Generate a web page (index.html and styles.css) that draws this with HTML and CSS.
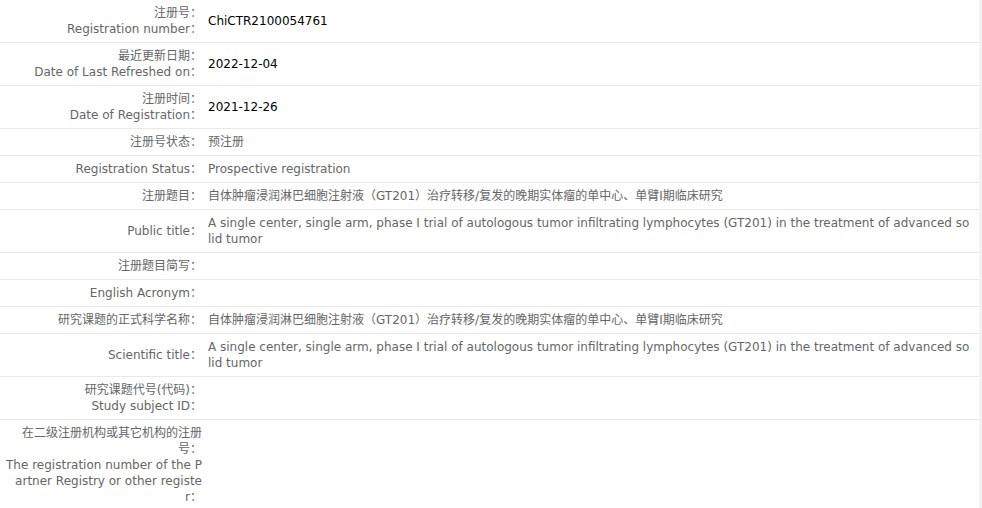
FILE: index.html
```html
<!DOCTYPE html>
<html lang="zh">
<head>
<meta charset="utf-8">
<title>ChiCTR2100054761</title>
<link rel="stylesheet" href="styles.css">
</head>
<body>
<div class="sheet">
  <div class="row">
    <div class="label">注册号：<br>Registration number：</div>
    <div class="value strong">ChiCTR2100054761</div>
  </div>
  <div class="row">
    <div class="label">最近更新日期：<br>Date of Last Refreshed on：</div>
    <div class="value strong">2022-12-04</div>
  </div>
  <div class="row">
    <div class="label">注册时间：<br>Date of Registration：</div>
    <div class="value strong">2021-12-26</div>
  </div>
  <div class="row">
    <div class="label">注册号状态：</div>
    <div class="value">预注册</div>
  </div>
  <div class="row">
    <div class="label">Registration Status：</div>
    <div class="value">Prospective registration</div>
  </div>
  <div class="row">
    <div class="label">注册题目：</div>
    <div class="value">自体肿瘤浸润淋巴细胞注射液（GT201）治疗转移/复发的晚期实体瘤的单中心、单臂I期临床研究</div>
  </div>
  <div class="row">
    <div class="label">Public title：</div>
    <div class="value">A single center, single arm, phase I trial of autologous tumor infiltrating lymphocytes (GT201) in the treatment of advanced solid tumor</div>
  </div>
  <div class="row">
    <div class="label">注册题目简写：</div>
    <div class="value"></div>
  </div>
  <div class="row">
    <div class="label">English Acronym：</div>
    <div class="value"></div>
  </div>
  <div class="row">
    <div class="label">研究课题的正式科学名称：</div>
    <div class="value">自体肿瘤浸润淋巴细胞注射液（GT201）治疗转移/复发的晚期实体瘤的单中心、单臂I期临床研究</div>
  </div>
  <div class="row">
    <div class="label">Scientific title：</div>
    <div class="value">A single center, single arm, phase I trial of autologous tumor infiltrating lymphocytes (GT201) in the treatment of advanced solid tumor</div>
  </div>
  <div class="row">
    <div class="label">研究课题代号(代码)：<br>Study subject ID：</div>
    <div class="value"></div>
  </div>
  <div class="row">
    <div class="label">在二级注册机构或其它机构的注册号：<br>The registration number of the Partner Registry or other register：</div>
    <div class="value"></div>
  </div>
</div>
</body>
</html>
```
FILE: styles.css
```css
html, body {
  margin: 0;
  padding: 0;
  background: #f3f3f3;
}
body {
  font-family: "DejaVu Sans", "Noto Sans CJK SC", sans-serif;
  font-size: 12px;
  line-height: 16px;
  color: #666;
}
.sheet {
  width: 979px;
  background: #fff;
  min-height: 508px;
}
.row {
  display: grid;
  grid-template-columns: 205px 1fr;
  align-items: center;
  border-bottom: 1px solid #e9e9e9;
}
.label {
  padding: 5px 3px 5px 5px;
  text-align: right;
  word-break: break-all;
}
.value {
  padding: 5px 8px 5px 3px;
  word-break: break-all;
}
.value.strong {
  color: #000;
}
```
